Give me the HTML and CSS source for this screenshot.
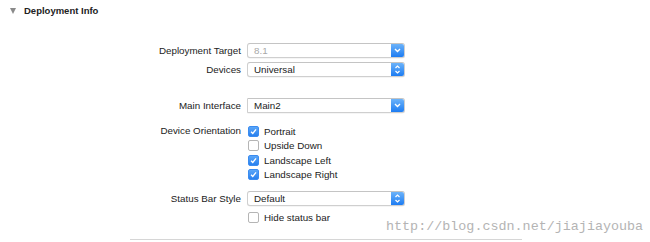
FILE: index.html
```html
<!DOCTYPE html>
<html>
<head>
<meta charset="utf-8">
<link rel="stylesheet" href="styles.css">
</head>
<body>
<div class="page">
  <div class="header">
    <span class="disclosure"></span>
    <span class="title">Deployment Info</span>
  </div>
  <div class="form">
    <div class="row r-target">
      <div class="label">Deployment Target</div>
      <div class="popup disabled"><span class="value">8.1</span><span class="btn"><svg width="13" height="13" viewBox="0 0 13 13"><path d="M4 5 L6.5 7.5 L9 5" fill="none" stroke="#fff" stroke-width="1.4"/></svg></span></div>
    </div>
    <div class="row r-devices">
      <div class="label">Devices</div>
      <div class="popup"><span class="value">Universal</span><span class="btn"><svg width="13" height="13" viewBox="0 0 13 13"><path d="M4.5 5 L6.5 3 L8.5 5 M4.5 8 L6.5 10 L8.5 8" fill="none" stroke="#fff" stroke-width="1.2"/></svg></span></div>
    </div>
    <div class="row r-main">
      <div class="label">Main Interface</div>
      <div class="popup combo"><span class="value">Main2</span><span class="btn"><svg width="13" height="13" viewBox="0 0 13 13"><path d="M4 5 L6.5 7.5 L9 5" fill="none" stroke="#fff" stroke-width="1.4"/></svg></span></div>
    </div>
    <div class="row r-orient">
      <div class="label">Device Orientation</div>
      <div class="checks">
        <label class="check"><span class="box on"><svg width="10" height="10" viewBox="0 0 10 10"><path d="M2.3 5.2 L4.2 7.1 L7.8 2.6" fill="none" stroke="#fff" stroke-width="1.5"/></svg></span>Portrait</label>
        <label class="check"><span class="box"></span>Upside Down</label>
        <label class="check"><span class="box on"><svg width="10" height="10" viewBox="0 0 10 10"><path d="M2.3 5.2 L4.2 7.1 L7.8 2.6" fill="none" stroke="#fff" stroke-width="1.5"/></svg></span>Landscape Left</label>
        <label class="check"><span class="box on"><svg width="10" height="10" viewBox="0 0 10 10"><path d="M2.3 5.2 L4.2 7.1 L7.8 2.6" fill="none" stroke="#fff" stroke-width="1.5"/></svg></span>Landscape Right</label>
      </div>
    </div>
    <div class="row r-status">
      <div class="label">Status Bar Style</div>
      <div class="popup"><span class="value">Default</span><span class="btn"><svg width="13" height="13" viewBox="0 0 13 13"><path d="M4.5 5 L6.5 3 L8.5 5 M4.5 8 L6.5 10 L8.5 8" fill="none" stroke="#fff" stroke-width="1.2"/></svg></span></div>
    </div>
    <div class="row r-hide">
      <div class="label"></div>
      <label class="check"><span class="box"></span>Hide status bar</label>
    </div>
  </div>
  <div class="watermark">http://blog.csdn.net/jiajiayouba</div>
  <div class="divider"></div>
</div>
</body>
</html>
```
FILE: styles.css
```css
html, body {
  margin: 0;
  padding: 0;
  background: #fff;
}
.page {
  width: 650px;
  height: 242px;
  position: relative;
  overflow: hidden;
  font-family: "Liberation Sans", Arial, sans-serif;
  font-size: 9.8px;
  color: #222;
}
.header {
  display: flex;
  align-items: center;
  gap: 8px;
  padding: 4px 0 0 10px;
  height: 13px;
}
.disclosure {
  width: 0;
  height: 0;
  border-left: 3.5px solid transparent;
  border-right: 3.5px solid transparent;
  border-top: 6px solid #8a8a8a;
}
.title {
  font-weight: bold;
  font-size: 9.5px;
  color: #222;
}
.form {
  display: flex;
  flex-direction: column;
  padding-top: 26px;
}
.row {
  display: grid;
  grid-template-columns: 241px 158px;
  column-gap: 6px;
  align-items: start;
}
.label {
  text-align: right;
  line-height: 15px;
}
.r-devices { margin-top: 4px; }
.r-main { margin-top: 21px; }
.r-orient { margin-top: 11px; }
.r-status { margin-top: 9px; }
.r-hide { margin-top: 4px; }
.r-orient .label { line-height: 14.5px; }
.popup {
  height: 13px;
  border: 1px solid #cfcfcf;
  border-top-color: #c4c4c4;
  border-radius: 3px;
  background: #fff;
  display: flex;
  align-items: center;
  justify-content: space-between;
  box-sizing: content-box;
  box-shadow: 0 0.5px 0.5px rgba(0,0,0,0.08);
}
.popup.combo {
  border-radius: 1px 3px 3px 1px;
}
.popup .value {
  padding-left: 6px;
  line-height: 13px;
}
.popup.disabled .value {
  color: #a8a8a8;
}
.btn {
  width: 13px;
  height: 13px;
  border-radius: 0 2px 2px 0;
  background: linear-gradient(#6cb3fa, #1d7cf2);
  display: flex;
}
.checks {
  display: flex;
  flex-direction: column;
}
.check {
  display: flex;
  align-items: center;
  gap: 5px;
  height: 14.5px;
  padding-left: 1px;
}
.box {
  width: 9px;
  height: 9px;
  border: 1px solid #b5b5b5;
  border-radius: 2px;
  background: #fff;
  display: flex;
  box-sizing: content-box;
}
.box.on {
  border-color: #3b8cf0;
  background: linear-gradient(#5aa6f8, #2880ee);
}
.box svg {
  width: 9px;
  height: 9px;
}
.watermark {
  position: absolute;
  left: 386px;
  top: 219px;
  font-family: "Liberation Mono", "DejaVu Sans Mono", monospace;
  font-size: 13.4px;
  color: #b4b4b4;
  white-space: nowrap;
}
.divider {
  position: absolute;
  left: 130px;
  width: 392px;
  top: 239px;
  height: 1px;
  background: #d6d6d6;
}
```
